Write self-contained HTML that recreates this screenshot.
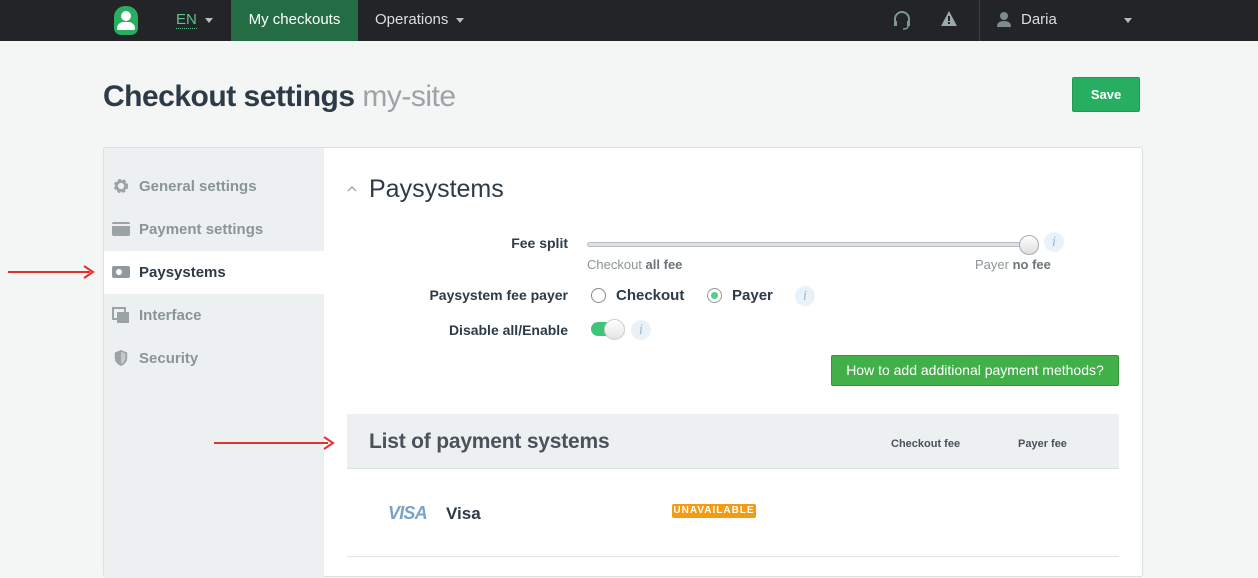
<!DOCTYPE html>
<html><head><meta charset="utf-8"><style>
*{box-sizing:border-box;margin:0;padding:0}
body{width:1258px;height:569px;overflow:hidden;background:#f4f5f5;font-family:"Liberation Sans",sans-serif;position:relative;color:#333}
.nav{position:absolute;left:0;top:0;width:1258px;height:41px;background:#222428;color:#ddd;font-size:15px}
.nav .it{position:absolute;top:0;height:41px;line-height:40px}
.caret{display:inline-block;width:0;height:0;border-left:4px solid transparent;border-right:4px solid transparent;border-top:5px solid #bbb;vertical-align:middle;margin-left:8px}
.abs{position:absolute}
h1{position:absolute;left:103px;top:80px;font-size:30px;font-weight:bold;color:#2d3a48;letter-spacing:-0.5px}
h1 span{font-weight:normal;color:#9ea3a8}
.save{position:absolute;left:1072px;top:77px;width:68px;height:35px;background:#27ae60;border:1px solid #1f9a52;color:#fff;font-weight:bold;font-size:13px;text-align:center;line-height:33px;border-radius:2px}
.card{position:absolute;left:103px;top:147px;width:1040px;height:430px;background:#fff;border:1px solid #dcdfe0;border-radius:3px}
.side{position:absolute;left:0;top:0;width:220px;height:430px;background:#ecf0f0}
.si{position:absolute;left:0;width:220px;height:43px;line-height:43px;padding-left:35px;font-size:15px;font-weight:bold;color:#8b9598}
.si .ic{position:absolute;left:8px;top:13px;width:18px;height:16px}
.lbl{position:absolute;font-size:14px;font-weight:bold;color:#2d3a48;text-align:right;width:230px;left:338px}
.info{position:absolute;width:20px;height:20px;border-radius:50%;background:#eaf2f9;color:#9bbbd6;font-family:"Liberation Serif",serif;font-style:italic;font-size:15px;text-align:center;line-height:20px}
.small{font-size:13px;color:#8b9598}
.small b{color:#6b7478}
.radio{position:absolute;width:15px;height:15px;border-radius:50%;border:1px solid #888;background:#fff}
</style></head><body>
<div class="nav">
 <div class="abs" style="left:114px;top:6px;width:24px;height:29px;background:#27ae60;border-radius:11px 11px 7px 7px"></div>
 <div class="abs" style="left:121px;top:11px;width:10px;height:10px;border-radius:50%;background:#fff"></div>
 <div class="abs" style="left:117px;top:22px;width:18px;height:8px;border-radius:9px 9px 2px 2px;background:#fff"></div>
 <div class="it" style="left:176px;color:#5cc48a"><span style="border-bottom:1px dotted #5cc48a;line-height:18px">EN</span><span class="caret"></span></div>
 <div class="it" style="left:231px;width:127px;background:#236c44;text-align:center;color:#fff">My checkouts</div>
 <div class="it" style="left:375px;color:#ddd">Operations<span class="caret"></span></div>
 <svg class="abs" style="left:892px;top:10px" width="20" height="20" viewBox="0 0 20 20"><path d="M3 12V9a7 7 0 0 1 14 0v3" fill="none" stroke="#7d9792" stroke-width="2"/><rect x="2" y="11" width="3" height="5" fill="#7d9792"/><rect x="15" y="11" width="3" height="5" fill="#7d9792"/><path d="M16 16q0 3-5 3" stroke="#7d9792" fill="none" stroke-width="1.5"/></svg>
 <svg class="abs" style="left:940px;top:10px" width="18" height="18" viewBox="0 0 18 18"><path d="M9 1L17 16H1Z" fill="#9aa"/><rect x="8" y="6" width="2" height="5" fill="#222428"/><rect x="8" y="12" width="2" height="2" fill="#222428"/></svg>
 <div class="abs" style="left:979px;top:0;width:1px;height:41px;background:#3c3f44"></div>
 <svg class="abs" style="left:996px;top:11px" width="16" height="16" viewBox="0 0 16 16"><circle cx="8" cy="5" r="4" fill="#7d8c8c"/><path d="M1 16q0-6 7-6t7 6z" fill="#7d8c8c"/></svg>
 <div class="it" style="left:1021px;color:#ddd">Daria</div>
 <div class="it" style="left:1116px"><span class="caret"></span></div>
</div>
<h1>Checkout settings <span>my-site</span></h1>
<div class="save">Save</div>
<div class="abs" style="left:8px;top:271px;width:82px;height:2px;background:#e53030"></div>
<svg class="abs" style="left:82px;top:264px" width="14" height="16"><path d="M2 2L11 8L2 14" fill="none" stroke="#e53030" stroke-width="2"/></svg>
<div class="card">
 <div class="side">
  <div class="si" style="top:17px"><svg class="ic" viewBox="0 0 18 18"><circle cx="9" cy="9" r="6" fill="none" stroke="#9aa3a6" stroke-width="4" stroke-dasharray="3 2"/><circle cx="9" cy="9" r="5" fill="none" stroke="#9aa3a6" stroke-width="3"/></svg>General settings</div>
  <div class="si" style="top:60px"><svg class="ic" viewBox="0 0 18 16"><rect x="0" y="1" width="18" height="14" rx="2" fill="#9aa3a6"/><rect x="0" y="3" width="18" height="2" fill="#eee"/></svg>Payment settings</div>
  <div class="si" style="top:103px;background:#fff;color:#2d3a48"><svg class="ic" viewBox="0 0 18 16"><rect x="0" y="2" width="18" height="12" rx="2" fill="#8e9a9d"/><circle cx="7" cy="8" r="3" fill="#fff"/></svg>Paysystems</div>
  <div class="si" style="top:146px"><svg class="ic" viewBox="0 0 18 16"><rect x="1" y="1" width="12" height="11" fill="none" stroke="#9aa3a6" stroke-width="2"/><rect x="5" y="5" width="12" height="11" fill="#9aa3a6"/></svg>Interface</div>
  <div class="si" style="top:189px"><svg class="ic" viewBox="0 0 18 18"><path d="M9 0L16 3V9Q16 15 9 18Q2 15 2 9V3Z" fill="#9aa3a6"/><path d="M9 2V16Q14 13 14 9V4Z" fill="#c4cacc"/></svg>Security</div>
 </div>
</div>
<svg class="abs" style="left:346px;top:184px" width="12" height="10"><path d="M2 7L6 3L10 7" fill="none" stroke="#aaa" stroke-width="1.5"/></svg>
<div class="abs" style="left:369px;top:175px;font-size:25px;color:#2d3a48">Paysystems</div>
<div class="lbl" style="top:235px">Fee split</div>
<div class="abs" style="left:587px;top:242px;width:448px;height:5px;border-radius:3px;background:#dfe2e4;border:1px solid #b9bec2"></div>
<div class="abs" style="left:1019px;top:235px;width:20px;height:20px;border-radius:50%;background:linear-gradient(#fff,#ddd);border:1px solid #aaa"></div>
<div class="info" style="left:1044px;top:232px">i</div>
<div class="abs small" style="left:587px;top:257px">Checkout <b>all fee</b></div>
<div class="abs small" style="left:975px;top:257px">Payer <b>no fee</b></div>
<div class="lbl" style="top:287px">Paysystem fee payer</div>
<div class="radio" style="left:591px;top:288px"></div>
<div class="abs" style="left:616px;top:287px;font-size:15px;font-weight:bold;color:#2d3a48">Checkout</div>
<div class="radio" style="left:707px;top:288px;border-color:#999"><div style="margin:3px;width:7px;height:7px;border-radius:50%;background:#4cd08a"></div></div>
<div class="abs" style="left:732px;top:287px;font-size:15px;font-weight:bold;color:#2d3a48">Payer</div>
<div class="info" style="left:795px;top:286px">i</div>
<div class="lbl" style="top:322px">Disable all/Enable</div>
<div class="abs" style="left:591px;top:322px;width:30px;height:14px;border-radius:7px;background:#3fc57a"></div>
<div class="abs" style="left:604px;top:319px;width:21px;height:21px;border-radius:50%;background:linear-gradient(#fff,#e4e4e4);border:1px solid #ccc"></div>
<div class="info" style="left:631px;top:320px">i</div>
<div class="abs" style="left:831px;top:355px;width:288px;height:31px;background:#42b049;border:1px solid #36953c;border-radius:2px;color:#fff;font-size:14px;text-align:center;line-height:29px">How to add additional payment methods?</div>
<div class="abs" style="left:214px;top:442px;width:114px;height:2px;background:#e53030"></div>
<svg class="abs" style="left:322px;top:435px" width="14" height="16"><path d="M2 2L11 8L2 14" fill="none" stroke="#e53030" stroke-width="2"/></svg>
<div class="abs" style="left:347px;top:414px;width:772px;height:55px;background:#ecf0f0;border-bottom:1px solid #dde1e2"></div>
<div class="abs" style="left:369px;top:430px;font-size:21px;font-weight:bold;color:#4a525a;letter-spacing:-0.2px">List of payment systems</div>
<div class="abs" style="left:891px;top:438px;font-size:11px;font-weight:bold;color:#4a525a">Checkout fee</div>
<div class="abs" style="left:1018px;top:438px;font-size:11px;font-weight:bold;color:#4a525a">Payer fee</div>
<div class="abs" style="left:388px;top:503px;font-size:18px;font-weight:900;font-style:italic;color:#7aa3c8;letter-spacing:-0.8px">VISA</div>
<div class="abs" style="left:446px;top:504px;font-size:17px;font-weight:bold;color:#2d3a48">Visa</div>
<div class="abs" style="left:672px;top:504px;width:84px;height:14px;background:#f39c12;border-radius:2px;color:#fff;font-size:10px;font-weight:bold;letter-spacing:1px;text-align:center;line-height:14px">UNAVAILABLE</div>
<div class="abs" style="left:347px;top:556px;width:772px;height:1px;background:#e2e5e6"></div>
</body></html>
